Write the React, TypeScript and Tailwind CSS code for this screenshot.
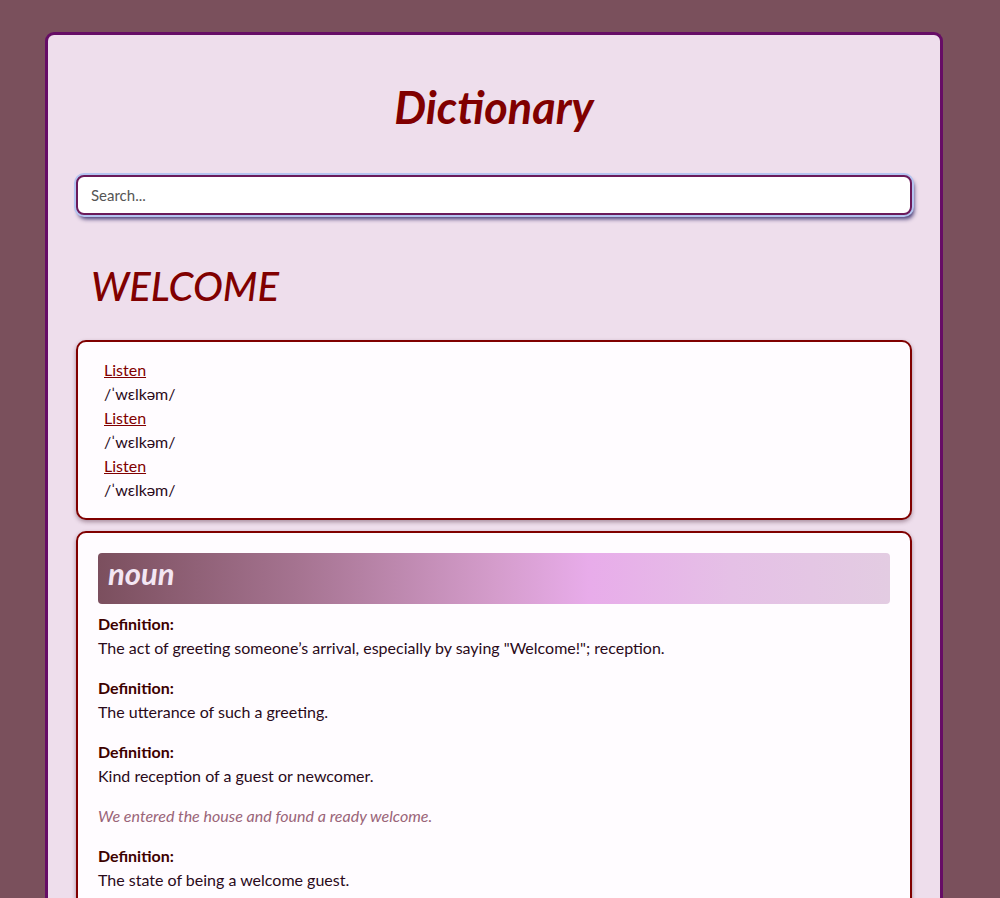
const phonetics = [
  { text: '/ˈwɛlkəm/' },
  { text: '/ˈwɛlkəm/' },
  { text: '/ˈwɛlkəm/' },
];

const definitions = [
  {
    definition: 'The act of greeting someone’s arrival, especially by saying "Welcome!"; reception.',
  },
  { definition: 'The utterance of such a greeting.' },
  {
    definition: 'Kind reception of a guest or newcomer.',
    example: 'We entered the house and found a ready welcome.',
  },
  { definition: 'The state of being a welcome guest.' },
];

export default function App() {
  return (
    <div className="min-h-screen bg-[#7a505c] pl-[45px] pt-[32px] font-['Lato','Open_Sans',sans-serif] text-[16px] leading-6">
      <div className="w-[898px] rounded-t-[9px] border-[3px] border-b-0 border-[#660d66] bg-[#eedeec] px-[28px] pb-10">
        <h1 className="pt-[44px] text-center text-[45px] font-bold italic leading-[56px] text-[#800000]">
          Dictionary
        </h1>

        <div className="mt-[40px]">
          <input
            type="text"
            placeholder="Search..."
            className="h-[40px] w-full rounded-[8px] border-2 border-[#6b1a5a] bg-white px-[13px] text-[15px] text-[#333] placeholder:text-[#555] shadow-[0_0_0_2px_#b4c4f0,2px_4px_4px_#3f3470] outline-none"
          />
        </div>

        <h2 className="mt-[46px] px-[15px] text-[40px] font-medium italic leading-[50px] text-[#800000]">
          WELCOME
        </h2>

        <div className="mt-[29px] rounded-[10px] border-2 border-[#800000] bg-[#fffcff] px-[26px] pt-[16px] pb-[16px] shadow-[0_2px_4px_rgba(60,20,40,0.4)]">
          {phonetics.map((p, i) => (
            <div key={i}>
              <a href="#" className="text-[#800000] underline">
                Listen
              </a>
              <div className="text-[#2a0a1a]">{p.text}</div>
            </div>
          ))}
        </div>

        <div className="mt-[11px] rounded-[10px] border-2 border-[#800000] bg-[#fffcff] px-[20px] pt-[20px] pb-6 shadow-[0_2px_4px_rgba(60,20,40,0.4)]">
          <div className="flex h-[51px] items-start rounded-[4px] bg-[linear-gradient(to_right,#7b4f5e_0%,#a57390_25%,#d49ccb_50%,#e8acea_62%,#e5c0e6_80%,#e3cce2_100%)] px-[10px]">
            <span className="pt-[1px] text-[31px] font-bold italic leading-[38px] text-[#f3e6f3]">noun</span>
          </div>
          <div className="mt-[8px]">
            {definitions.map((d, i) => (
              <div key={i} className="mb-[16px]">
                <div className="font-bold text-[#3d0000]">Definition:</div>
                <div className="text-[#2a0a1a]">{d.definition}</div>
                {d.example && (
                  <div className="mt-[16px] italic text-[#9a6478]">{d.example}</div>
                )}
              </div>
            ))}
          </div>
        </div>
      </div>
    </div>
  );
}
